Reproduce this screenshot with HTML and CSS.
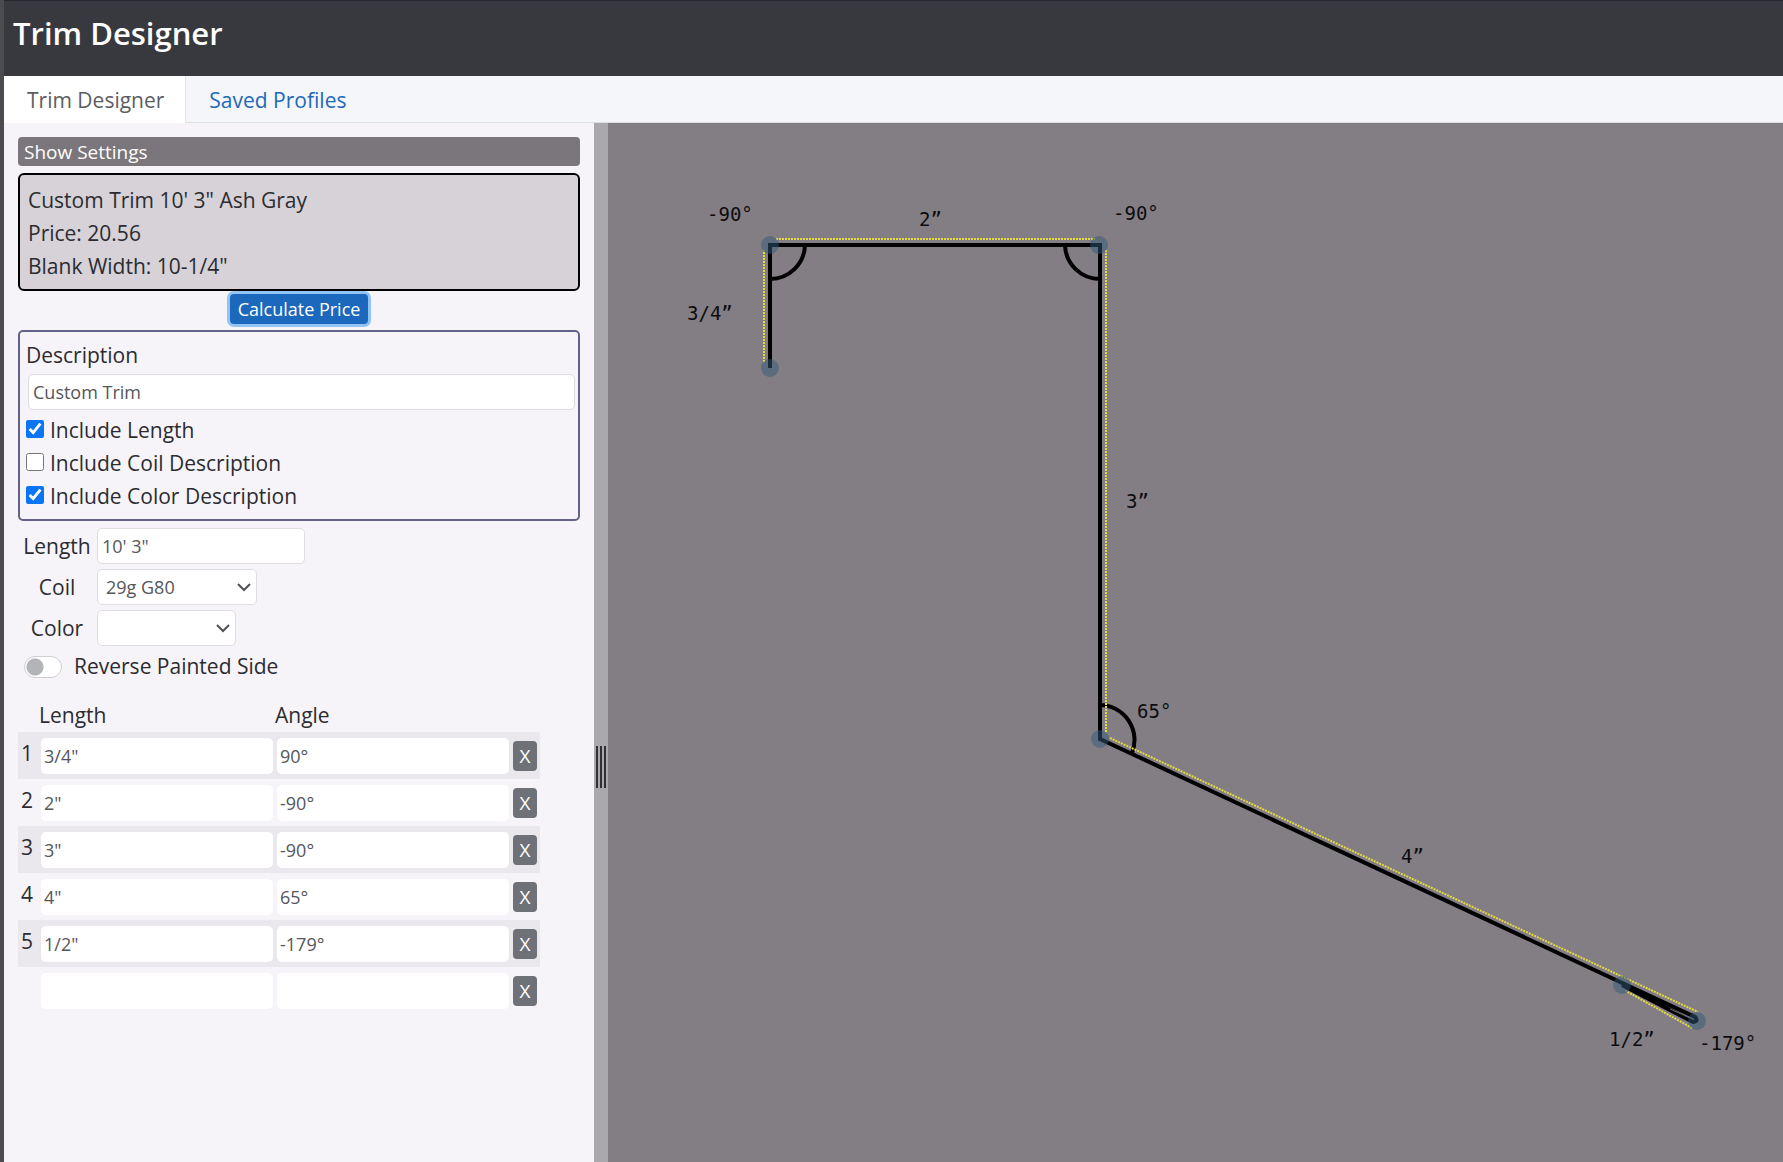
FILE: index.html
```html
<!DOCTYPE html>
<html lang="en">
<head>
<meta charset="utf-8">
<title>Trim Designer</title>
<link rel="stylesheet" href="styles.css">
</head>
<body>
<div class="window">
  <header class="titlebar"><h1>Trim Designer</h1></header>
  <nav class="tabs">
    <a class="tab active" href="#designer">Trim Designer</a>
    <a class="tab" href="#saved">Saved Profiles</a>
  </nav>
  <main class="workspace">
    <section class="panel">
      <button class="settings" type="button">Show Settings</button>
      <div class="summary">
        <p>Custom Trim 10' 3" Ash Gray</p>
        <p>Price: 20.56</p>
        <p>Blank Width: 10-1/4"</p>
      </div>
      <button class="calculate" type="button">Calculate Price</button>
      <div class="describe">
        <label for="description">Description</label>
        <input class="field" id="description" type="text" value="Custom Trim">
        <label class="check"><input type="checkbox" checked>Include Length</label>
        <label class="check"><input type="checkbox">Include Coil Description</label>
        <label class="check"><input type="checkbox" checked>Include Color Description</label>
      </div>
      <div class="options">
        <label for="length">Length</label>
        <input class="field length" id="length" type="text" value="10' 3&quot;">
        <label for="coil">Coil</label>
        <select class="field coil" id="coil"><option>29g G80</option></select>
        <label for="color">Color</label>
        <select class="field color" id="color"><option></option></select>
      </div>
      <label class="reverse"><input class="switch" type="checkbox" role="switch">Reverse Painted Side</label>
      <table class="segments">
        <thead>
          <tr><th class="num"></th><th>Length</th><th>Angle</th><th class="remove"></th></tr>
        </thead>
        <tbody>
          <tr><td class="num">1</td><td><input class="field" aria-label="Length 1" value="3/4&quot;"></td><td><input class="field" aria-label="Angle 1" value="90°"></td><td><button class="delete" type="button">X</button></td></tr>
          <tr><td class="num">2</td><td><input class="field" aria-label="Length 2" value="2&quot;"></td><td><input class="field" aria-label="Angle 2" value="-90°"></td><td><button class="delete" type="button">X</button></td></tr>
          <tr><td class="num">3</td><td><input class="field" aria-label="Length 3" value="3&quot;"></td><td><input class="field" aria-label="Angle 3" value="-90°"></td><td><button class="delete" type="button">X</button></td></tr>
          <tr><td class="num">4</td><td><input class="field" aria-label="Length 4" value="4&quot;"></td><td><input class="field" aria-label="Angle 4" value="65°"></td><td><button class="delete" type="button">X</button></td></tr>
          <tr><td class="num">5</td><td><input class="field" aria-label="Length 5" value="1/2&quot;"></td><td><input class="field" aria-label="Angle 5" value="-179°"></td><td><button class="delete" type="button">X</button></td></tr>
          <tr><td class="num"></td><td><input class="field" aria-label="New length"></td><td><input class="field" aria-label="New angle"></td><td><button class="delete" type="button">X</button></td></tr>
        </tbody>
      </table>
    </section>
    <div class="splitter" role="separator"><span></span><span></span><span></span></div>
    <section class="canvas">
      <svg class="profile" viewBox="608 123 1175 1039" preserveAspectRatio="xMinYMin meet">
        <g class="metal">
          <path d="M770 368V245H1100V739L1695 1017Q1699 1021 1693 1022L1622 985"/>
          <path d="M805 245A35 35 0 0 1 770 279M1065 245A35 35 0 0 0 1100 279M1100 705A35 35 0 0 1 1132 753"/>
        </g>
        <path class="paint" d="M764 362V250M776 239H1095M1106 250V732M1110 738L1698 1012M1692 1028L1626 991"/>
        <path class="gap" d="M1670 1009L1690 1018"/>
        <g class="nodes">
          <circle cx="770" cy="368" r="9"/>
          <circle cx="770" cy="245" r="9"/>
          <circle cx="1099" cy="245" r="9"/>
          <circle cx="1100" cy="739" r="9"/>
          <circle cx="1622" cy="985" r="9"/>
          <circle cx="1697" cy="1021" r="9"/>
        </g>
        <g class="measure">
          <text x="707" y="221">-90°</text>
          <text x="919" y="226">2”</text>
          <text x="1113" y="220">-90°</text>
          <text x="687" y="320">3/4”</text>
          <text x="1126" y="508">3”</text>
          <text x="1137" y="718">65°</text>
          <text x="1401" y="863">4”</text>
          <text x="1609" y="1046">1/2”</text>
          <text x="1699" y="1050">-179°</text>
        </g>
      </svg>
    </section>
  </main>
</div>
</body>
</html>
```

FILE: styles.css
```css
* { box-sizing: border-box; }

body {
  margin: 0;
  font: 21px/33px "Open Sans", "Noto Sans", sans-serif;
  color: #2b2c30;
  background: #4c4b50;
}

button, input, select { font: inherit; color: inherit; }
p { margin: 0; }

.window {
  display: flex;
  flex-direction: column;
  min-height: 100vh;
  margin-left: 4px;
  background: #f7f4f9;
}

.titlebar {
  height: 76px;
  padding: 12px 9px;
  border-top: 1px solid #23262d;
  background: #38383f;
  color: #fff;
}

.titlebar h1 {
  margin: 0;
  font-size: 31px;
  line-height: 40px;
  font-weight: 600;
}

.tabs {
  display: flex;
  height: 47px;
  background: #f5f6fa;
  border-bottom: 1px solid #dedfe3;
}

.tab {
  padding: 8px 21px 6px 23px;
  color: #1f69b8;
  text-decoration: none;
}

.tab.active {
  height: 47px;
  border-right: 1px solid #e4e5e9;
  background: #fff;
  color: #5c5d61;
}

.workspace {
  flex: 1;
  display: grid;
  grid-template-columns: minmax(590px, 33%) 14px 1fr;
}

.panel {
  display: flex;
  flex-direction: column;
  padding: 14px;
}

.settings {
  height: 29px;
  margin-bottom: 7px;
  padding: 0 6px;
  border: 0;
  border-radius: 4px;
  background: #7b767b;
  color: #fff;
  font-size: 19px;
  line-height: 28px;
  text-align: left;
}

.summary {
  padding: 9px 8px 6px;
  border: 2px solid #000;
  border-radius: 6px;
  background: #d6d2d8;
}

.calculate {
  align-self: center;
  height: 30px;
  margin: 3px 0 6px;
  padding: 0 8px;
  border: 0;
  border-radius: 4px;
  background: #1b68bd;
  box-shadow: 0 0 0 3px #93c2f4;
  color: #fff;
  font-size: 18px;
  line-height: 28px;
}

.describe {
  display: flex;
  flex-direction: column;
  padding: 7px 6px 6px;
  border: 2px solid #636388;
  border-radius: 5px;
}

.describe .field { margin: 2px -3px 4px 2px; }

.check {
  display: flex;
  align-items: center;
  gap: 6px;
}

.check input {
  width: 18px;
  height: 18px;
  margin: 0 0 3px;
  accent-color: #0a75f5;
}

.field {
  height: 36px;
  padding: 0 4px;
  border: 1px solid #dfdde2;
  border-radius: 5px;
  background: #fff;
  color: #55565a;
  font-size: 18px;
}

.options {
  display: grid;
  grid-template-columns: 66px 1fr;
  gap: 5px 7px;
  align-items: center;
  justify-items: start;
  margin-top: 7px;
  padding-left: 6px;
}

.options label { justify-self: center; }
.length { width: 208px; }
.coil { width: 160px; }
.color { width: 139px; }

select.field {
  appearance: none;
  padding: 0 32px 0 8px;
  background: #fff url("data:image/svg+xml,%3Csvg xmlns='http://www.w3.org/2000/svg' width='14' height='9'%3E%3Cpath d='M1 1l6 6 6-6' fill='none' stroke='%23505156' stroke-width='2'/%3E%3C/svg%3E") no-repeat right 5px center;
}

.reverse {
  display: flex;
  align-items: center;
  gap: 12px;
  margin: 4px 0 16px 6px;
}

.switch {
  appearance: none;
  width: 38px;
  height: 22px;
  margin: 0;
  border: 1px solid #cfcfd3;
  border-radius: 11px;
  background: #fff radial-gradient(circle at 10px 10px, #b3b4b8 8px, transparent 9px);
}

.segments {
  width: 522px;
  border-collapse: collapse;
  table-layout: fixed;
}

.segments th {
  padding: 0;
  font-weight: 400;
  text-align: left;
}

.segments .num { width: 21px; }
.segments .remove { width: 29px; }
.segments tbody tr { height: 47px; }
.segments tbody tr:nth-child(odd) { background: #ebe8ed; }

.segments td {
  padding: 0 2px;
  vertical-align: middle;
}

.segments td.num {
  padding: 0 0 5px 3px;
}

.segments .field {
  display: block;
  width: 100%;
  padding: 0 2px;
  border-color: transparent;
}

.delete {
  display: block;
  width: 24px;
  height: 30px;
  padding: 0;
  border: 0;
  border-radius: 4px;
  background: #6e7278;
  color: #fff;
  font-size: 19px;
  line-height: 28px;
}

.splitter {
  display: flex;
  align-items: center;
  justify-content: center;
  gap: 2px;
  padding-top: 248px;
  background: #aba8ad;
  cursor: col-resize;
}

.splitter span {
  width: 2px;
  height: 42px;
  background: #302f34;
}

.canvas {
  background: #837e83;
}

.profile {
  display: block;
  width: 100%;
}

.metal {
  fill: none;
  stroke: #000;
  stroke-width: 4;
}

.paint {
  fill: none;
  stroke: #e3da45;
  stroke-width: 2;
  stroke-dasharray: 2 1;
}

.gap {
  stroke: #6d6a70;
  stroke-width: 1;
}

.nodes { fill: rgb(50 90 120 / 50%); }

.measure {
  fill: #0c0c0e;
  font: 19px "DejaVu Sans Mono", monospace;
}
```
